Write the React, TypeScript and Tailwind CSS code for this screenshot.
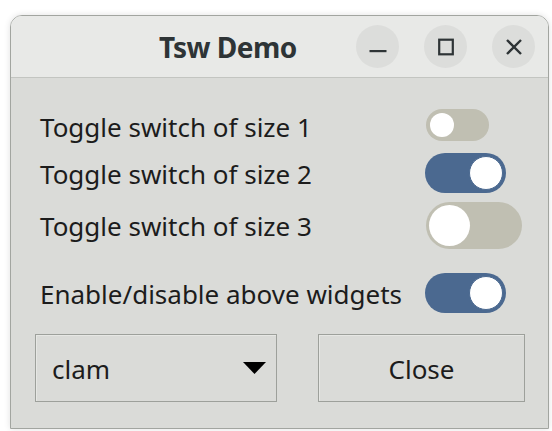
import React from "react";

type ToggleProps = {
  on: boolean;
  w: number;
  h: number;
  knob: number;
};

function Toggle({ on, w, h, knob }: ToggleProps) {
  const pad = (h - knob) / 2;
  return (
    <div
      className={`relative shrink-0 rounded-full ${on ? "bg-[#4b6990]" : "bg-[#c0bfb2]"}`}
      style={{ width: w, height: h }}
    >
      <div
        className={`absolute rounded-full bg-white ${on ? "border border-[#4b6990]" : ""}`}
        style={{ width: knob, height: knob, top: pad, left: on ? w - knob - pad : pad }}
      />
    </div>
  );
}

function TitleButton({ children }: { children: React.ReactNode }) {
  return (
    <div className="flex h-[43px] w-[43px] items-center justify-center rounded-full bg-[#dcdddb]">
      {children}
    </div>
  );
}

export default function App() {
  const font = { fontFamily: '"Noto Sans", "Open Sans", sans-serif' };
  return (
    <div className="h-[431px] w-[552px] bg-white pl-[10px] pt-[15px]" style={font}>
      <div className="flex h-[414px] w-[539px] flex-col overflow-hidden rounded-t-[12px] border border-[#a2a5a0] shadow-[0_0_6px_rgba(0,0,0,0.12)]">
        {/* header bar */}
        <div className="flex h-[62px] shrink-0 items-center border-b border-[#c3c5c1] bg-[#e8e9e7] pr-[13px]">
          <div className="pl-[148px] text-[28px] font-bold leading-none tracking-[-0.5px] text-[#2e3436]">Tsw Demo</div>
          <div className="ml-auto flex gap-[25px]">
            <TitleButton>
              <svg width="18" height="18" viewBox="0 0 18 18">
                <rect x="0.5" y="12" width="17" height="2.2" fill="#2e3436" />
              </svg>
            </TitleButton>
            <TitleButton>
              <svg width="18" height="18" viewBox="0 0 18 18">
                <rect x="2.2" y="1.7" width="13.6" height="14.6" fill="none" stroke="#2e3436" strokeWidth="2.2" />
              </svg>
            </TitleButton>
            <TitleButton>
              <svg width="18" height="18" viewBox="0 0 18 18">
                <path d="M2 2 L16 16 M16 2 L2 16" stroke="#2e3436" strokeWidth="2.4" />
              </svg>
            </TitleButton>
          </div>
        </div>

        {/* body */}
        <div className="flex flex-1 flex-col bg-[#dadbd8] pl-[29px] text-[26px] leading-none text-[#1c1c1c]">
          <div className="mt-[31px] flex h-[32px] items-center">
            <span className="w-[386px] pt-[4px]">Toggle switch of size 1</span>
            <Toggle on={false} w={63} h={32} knob={24} />
          </div>
          <div className="mt-[12px] flex h-[40px] items-center">
            <span className="w-[385px] pt-[2px]">Toggle switch of size 2</span>
            <Toggle on w={81} h={40} knob={34} />
          </div>
          <div className="mt-[9px] flex h-[47px] items-center">
            <span className="w-[386px] pt-[1px]">Toggle switch of size 3</span>
            <Toggle on={false} w={96} h={47} knob={41} />
          </div>
          <div className="mt-[24px] flex h-[40px] items-center">
            <span className="w-[385px] pt-[2px]">Enable/disable above widgets</span>
            <Toggle on w={81} h={40} knob={34} />
          </div>

          <div className="mt-[21px] flex">
            <div className="ml-[-5px] flex h-[68px] w-[242px] items-center justify-between border border-[#9da09b] pl-[16px] pr-[10px] shadow-[inset_1px_1px_0_#e6e7e4]">
              <span className="pt-[2px]">clam</span>
              <svg width="23" height="12" viewBox="0 0 23 12">
                <path d="M0 0 H23 L11.5 12 Z" fill="#000" />
              </svg>
            </div>
            <div className="ml-[41px] flex h-[68px] w-[207px] items-center justify-center border border-[#9da09b] pt-[2px] shadow-[inset_1px_1px_0_#e6e7e4]">
              Close
            </div>
          </div>
        </div>
      </div>
    </div>
  );
}
